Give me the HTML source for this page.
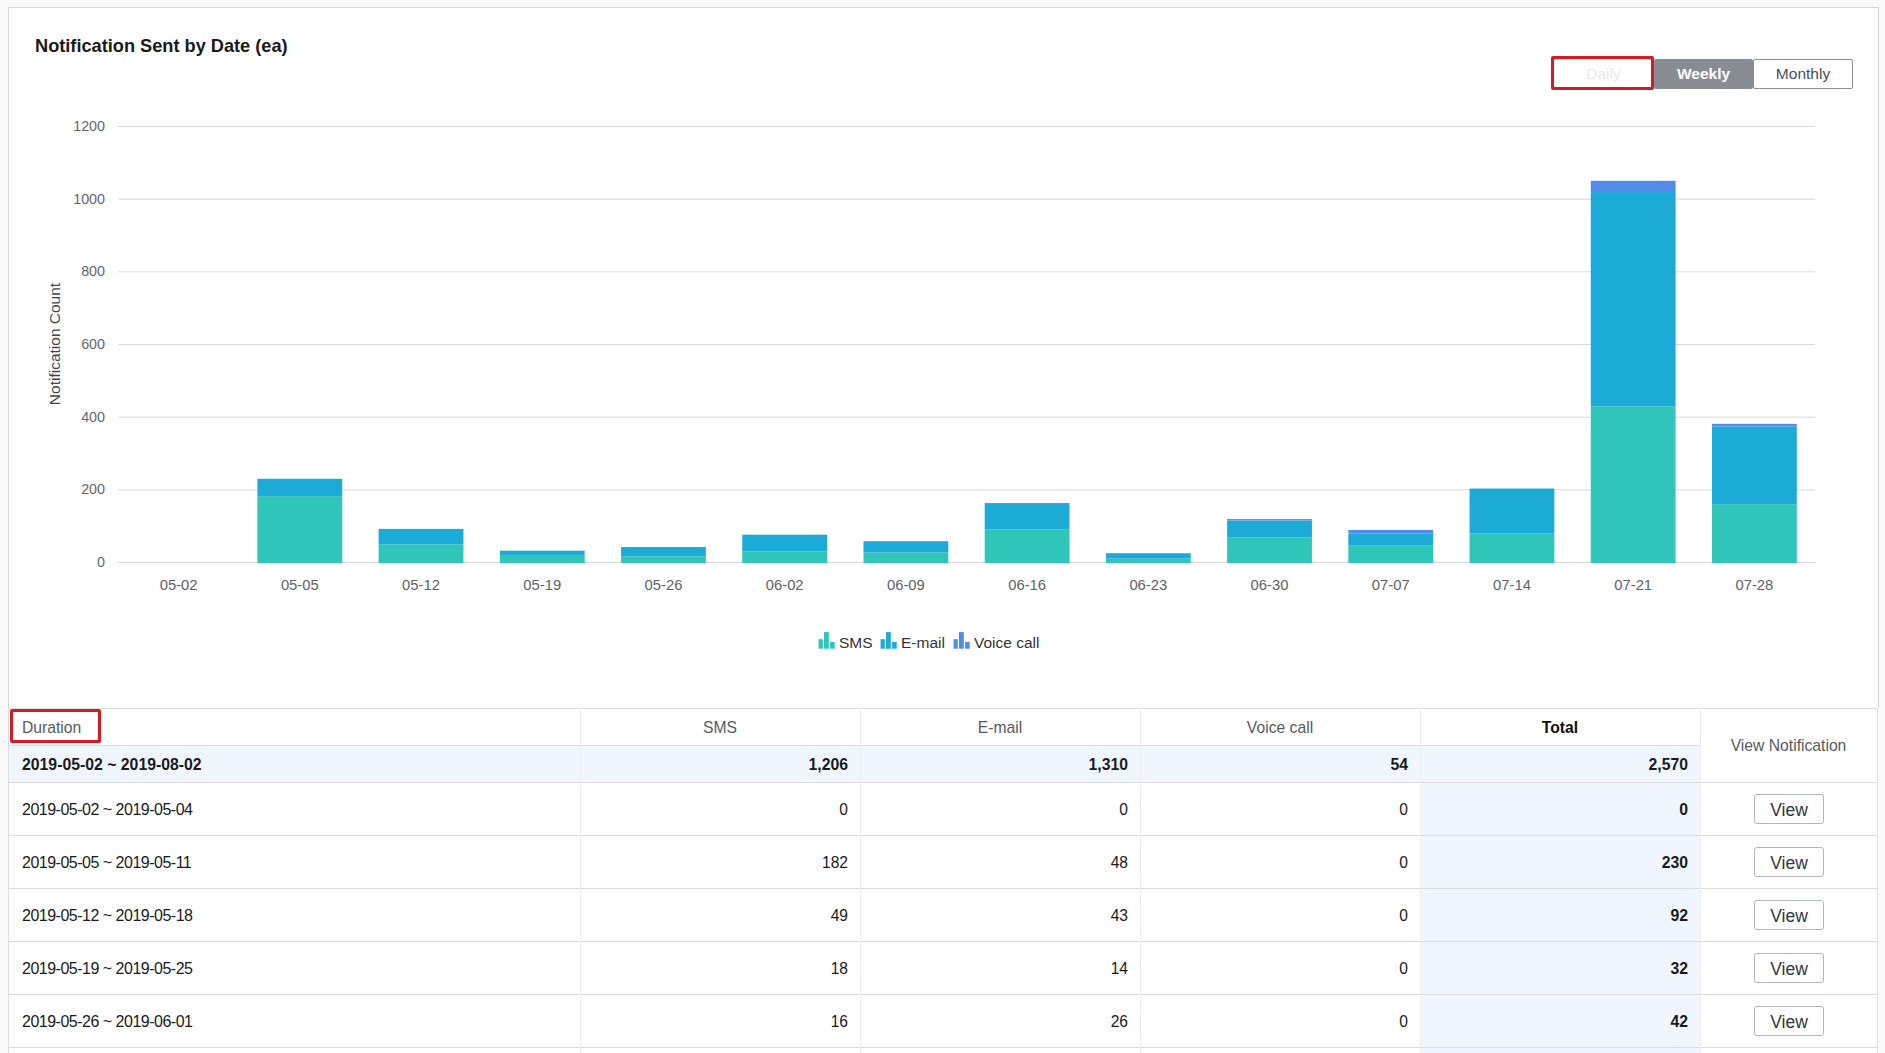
<!DOCTYPE html>
<html><head><meta charset="utf-8"><style>
html,body{margin:0;padding:0}
body{width:1885px;height:1053px;background:#f9f9f9;position:relative;overflow:hidden;font-family:"Liberation Sans",sans-serif}
.card{position:absolute;left:8px;top:7px;width:1869px;height:700px;background:#fff;border:1px solid #d8d9dc;border-bottom:none}
.white{position:absolute;left:8px;top:708px;width:1871px;height:345px;background:#fff}
.title{position:absolute;left:35px;top:36px;font-size:18.2px;font-weight:bold;color:#1a1a1a;white-space:nowrap}
.btn{position:absolute;top:59px;height:30px;box-sizing:border-box;font-size:15.5px;line-height:29px;text-align:center;border-radius:2px}
.red{position:absolute;box-sizing:border-box;border:3px solid #d01c27;border-radius:2px}
svg.chart{position:absolute;left:0;top:0}
.yl{font-size:14.3px;fill:#63676d}
.xl{font-size:14.8px;fill:#5e6268}
.ytitle{position:absolute;left:54.5px;top:343.5px;transform:translate(-50%,-50%) rotate(-90deg);font-size:15.5px;color:#444;white-space:nowrap}
.lg{position:absolute;top:632px;height:17px}
.lt{position:absolute;top:633px;font-size:15.5px;line-height:20px;color:#333;white-space:nowrap}
.bg{position:absolute;background:#eff6fd}
.hl{position:absolute;height:1px;background:#dcdcdc}
.vl{position:absolute;width:1px;background:#efefef}
.th{position:absolute;height:37px;line-height:40px;font-size:15.7px;color:#555a60;white-space:nowrap}
.td{position:absolute;height:53px;line-height:55px;font-size:15.6px;color:#1a1a1a;white-space:nowrap}
.td.b{font-weight:bold;font-size:15.8px}
.td.r{text-align:right}
.td.dt{font-size:16px;letter-spacing:-0.5px}
.vbtn{position:absolute;width:70px;height:30px;box-sizing:border-box;border:1px solid #b2b5ba;border-radius:3px;background:#fff;font-size:17.5px;line-height:30px;text-align:center;color:#2f3740}
</style></head><body>
<div class="card"></div>
<div class="white"></div>
<div class="title">Notification Sent by Date (ea)</div>
<div class="btn" style="left:1553px;width:101px;line-height:28px;border:1px solid #ddd;color:#e8e8e8;background:#fff">Daily</div>
<div class="btn" style="left:1654px;width:99px;background:#888c93;color:#fff;font-weight:bold">Weekly</div>
<div class="btn" style="left:1753px;width:100px;line-height:28px;border:1px solid #8a8d93;color:#4a4f57;background:#fff">Monthly</div>
<div class="red" style="left:1551px;top:56px;width:103px;height:34px"></div>
<svg class="chart" width="1885" height="700" font-family="Liberation Sans">
<rect x="118" y="126.00" width="1697" height="1" fill="#d9d9d9"/>
<rect x="118" y="198.67" width="1697" height="1" fill="#d9d9d9"/>
<rect x="118" y="271.33" width="1697" height="1" fill="#d9d9d9"/>
<rect x="118" y="344.00" width="1697" height="1" fill="#d9d9d9"/>
<rect x="118" y="416.67" width="1697" height="1" fill="#d9d9d9"/>
<rect x="118" y="489.33" width="1697" height="1" fill="#d9d9d9"/>
<rect x="118" y="562.00" width="1697" height="1" fill="#d9d9d9"/>
<text x="105" y="131.00" text-anchor="end" class="yl">1200</text>
<text x="105" y="203.67" text-anchor="end" class="yl">1000</text>
<text x="105" y="276.33" text-anchor="end" class="yl">800</text>
<text x="105" y="349.00" text-anchor="end" class="yl">600</text>
<text x="105" y="421.67" text-anchor="end" class="yl">400</text>
<text x="105" y="494.33" text-anchor="end" class="yl">200</text>
<text x="105" y="567.00" text-anchor="end" class="yl">0</text>
<text x="178.61" y="590.3" text-anchor="middle" class="xl">05-02</text>
<rect x="257.41" y="496.17" width="84.8" height="66.83" fill="#2fc5b8"/>
<rect x="257.41" y="478.73" width="84.8" height="17.44" fill="#1caad7"/>
<text x="299.82" y="590.3" text-anchor="middle" class="xl">05-05</text>
<rect x="378.63" y="544.50" width="84.8" height="18.50" fill="#2fc5b8"/>
<rect x="378.63" y="528.87" width="84.8" height="15.62" fill="#1caad7"/>
<text x="421.04" y="590.3" text-anchor="middle" class="xl">05-12</text>
<rect x="499.84" y="555.76" width="84.8" height="7.24" fill="#2fc5b8"/>
<rect x="499.84" y="550.67" width="84.8" height="5.09" fill="#1caad7"/>
<text x="542.25" y="590.3" text-anchor="middle" class="xl">05-19</text>
<rect x="621.06" y="556.49" width="84.8" height="6.51" fill="#2fc5b8"/>
<rect x="621.06" y="547.04" width="84.8" height="9.45" fill="#1caad7"/>
<text x="663.46" y="590.3" text-anchor="middle" class="xl">05-26</text>
<rect x="742.27" y="551.40" width="84.8" height="11.60" fill="#2fc5b8"/>
<rect x="742.27" y="534.69" width="84.8" height="16.71" fill="#1caad7"/>
<text x="784.68" y="590.3" text-anchor="middle" class="xl">06-02</text>
<rect x="863.49" y="552.49" width="84.8" height="10.51" fill="#2fc5b8"/>
<rect x="863.49" y="541.23" width="84.8" height="11.26" fill="#1caad7"/>
<text x="905.89" y="590.3" text-anchor="middle" class="xl">06-09</text>
<rect x="984.70" y="529.60" width="84.8" height="33.40" fill="#2fc5b8"/>
<rect x="984.70" y="503.08" width="84.8" height="26.52" fill="#1caad7"/>
<text x="1027.11" y="590.3" text-anchor="middle" class="xl">06-16</text>
<rect x="1105.91" y="558.67" width="84.8" height="4.33" fill="#2fc5b8"/>
<rect x="1105.91" y="553.22" width="84.8" height="5.45" fill="#1caad7"/>
<text x="1148.32" y="590.3" text-anchor="middle" class="xl">06-23</text>
<rect x="1227.13" y="537.59" width="84.8" height="25.41" fill="#2fc5b8"/>
<rect x="1227.13" y="520.52" width="84.8" height="17.08" fill="#1caad7"/>
<rect x="1227.13" y="519.06" width="84.8" height="1.45" fill="#518cea"/>
<text x="1269.54" y="590.3" text-anchor="middle" class="xl">06-30</text>
<rect x="1348.34" y="545.22" width="84.8" height="17.78" fill="#2fc5b8"/>
<rect x="1348.34" y="533.60" width="84.8" height="11.63" fill="#1caad7"/>
<rect x="1348.34" y="529.96" width="84.8" height="3.63" fill="#518cea"/>
<text x="1390.75" y="590.3" text-anchor="middle" class="xl">07-07</text>
<rect x="1469.56" y="533.60" width="84.8" height="29.40" fill="#2fc5b8"/>
<rect x="1469.56" y="488.54" width="84.8" height="45.05" fill="#1caad7"/>
<text x="1511.96" y="590.3" text-anchor="middle" class="xl">07-14</text>
<rect x="1590.77" y="406.43" width="84.8" height="156.57" fill="#2fc5b8"/>
<rect x="1590.77" y="192.06" width="84.8" height="214.37" fill="#1caad7"/>
<rect x="1590.77" y="180.80" width="84.8" height="11.26" fill="#518cea"/>
<text x="1633.18" y="590.3" text-anchor="middle" class="xl">07-21</text>
<rect x="1711.99" y="504.17" width="84.8" height="58.83" fill="#2fc5b8"/>
<rect x="1711.99" y="426.41" width="84.8" height="77.75" fill="#1caad7"/>
<rect x="1711.99" y="423.87" width="84.8" height="2.54" fill="#518cea"/>
<text x="1754.39" y="590.3" text-anchor="middle" class="xl">07-28</text>
</svg>
<div class="ytitle">Notification Count</div>
<div class="lg" style="left:818px"><svg width="17" height="17" viewBox="0 0 17 17" style="display:block"><rect x="0.6" y="7.2" width="4.2" height="9.5" fill="#2fc5b8"/><rect x="6" y="0.1" width="4.8" height="16.6" fill="#2fc5b8"/><rect x="12.1" y="10" width="4.6" height="6.7" fill="#2fc5b8"/></svg></div><div class="lt" style="left:839px">SMS</div>
<div class="lg" style="left:880px"><svg width="17" height="17" viewBox="0 0 17 17" style="display:block"><rect x="0.6" y="7.2" width="4.2" height="9.5" fill="#1caad7"/><rect x="6" y="0.1" width="4.8" height="16.6" fill="#1caad7"/><rect x="12.1" y="10" width="4.6" height="6.7" fill="#1caad7"/></svg></div><div class="lt" style="left:901px">E-mail</div>
<div class="lg" style="left:953px"><svg width="17" height="17" viewBox="0 0 17 17" style="display:block"><rect x="0.6" y="7.2" width="4.2" height="9.5" fill="#518cea"/><rect x="6" y="0.1" width="4.8" height="16.6" fill="#518cea"/><rect x="12.1" y="10" width="4.6" height="6.7" fill="#518cea"/></svg></div><div class="lt" style="left:974px">Voice call</div>
<div class="bg" style="left:1421px;top:783px;width:279px;height:270px"></div>
<div class="bg" style="left:9px;top:746px;width:1691px;height:36px"></div>
<div class="hl" style="left:8px;top:708px;width:1870px"></div>
<div class="hl" style="left:8px;top:745px;width:1692px"></div>
<div class="hl" style="left:8px;top:782px;width:1870px"></div>
<div class="hl" style="left:8px;top:835px;width:1870px"></div>
<div class="hl" style="left:8px;top:888px;width:1870px"></div>
<div class="hl" style="left:8px;top:941px;width:1870px"></div>
<div class="hl" style="left:8px;top:994px;width:1870px"></div>
<div class="hl" style="left:8px;top:1047px;width:1870px"></div>
<div class="vl" style="left:8px;top:708px;height:345px;background:#dedede"></div>
<div class="vl" style="left:1877px;top:708px;height:345px;background:#dedede"></div>
<div class="vl" style="left:580px;top:708px;height:345px"></div>
<div class="vl" style="left:860px;top:708px;height:345px"></div>
<div class="vl" style="left:1140px;top:708px;height:345px"></div>
<div class="vl" style="left:1420px;top:708px;height:345px"></div>
<div class="vl" style="left:1700px;top:708px;height:345px"></div>
<div class="th" style="left:22px;top:708px;width:300px;text-align:left">Duration</div>
<div class="th" style="left:580px;top:708px;width:280px;text-align:center">SMS</div>
<div class="th" style="left:860px;top:708px;width:280px;text-align:center">E-mail</div>
<div class="th" style="left:1140px;top:708px;width:280px;text-align:center">Voice call</div>
<div class="th" style="left:1420px;top:708px;width:280px;text-align:center;color:#111;font-weight:bold">Total</div>
<div class="th" style="left:1700px;top:726px;width:177px;text-align:center">View Notification</div>
<div class="td b" style="left:22px;top:745px;width:400px;height:37px;line-height:40px">2019-05-02 ~ 2019-08-02</div>
<div class="td b r" style="left:580px;top:745px;width:268px;height:37px;line-height:40px">1,206</div>
<div class="td b r" style="left:860px;top:745px;width:268px;height:37px;line-height:40px">1,310</div>
<div class="td b r" style="left:1140px;top:745px;width:268px;height:37px;line-height:40px">54</div>
<div class="td b r" style="left:1420px;top:745px;width:268px;height:37px;line-height:40px">2,570</div>
<div class="td dt" style="left:22px;top:782px;width:400px">2019-05-02 ~ 2019-05-04</div>
<div class="td r" style="left:580px;top:782px;width:268px">0</div>
<div class="td r" style="left:860px;top:782px;width:268px">0</div>
<div class="td r" style="left:1140px;top:782px;width:268px">0</div>
<div class="td r b" style="left:1420px;top:782px;width:268px">0</div>
<div class="vbtn" style="left:1754px;top:794px">View</div>
<div class="td dt" style="left:22px;top:835px;width:400px">2019-05-05 ~ 2019-05-11</div>
<div class="td r" style="left:580px;top:835px;width:268px">182</div>
<div class="td r" style="left:860px;top:835px;width:268px">48</div>
<div class="td r" style="left:1140px;top:835px;width:268px">0</div>
<div class="td r b" style="left:1420px;top:835px;width:268px">230</div>
<div class="vbtn" style="left:1754px;top:847px">View</div>
<div class="td dt" style="left:22px;top:888px;width:400px">2019-05-12 ~ 2019-05-18</div>
<div class="td r" style="left:580px;top:888px;width:268px">49</div>
<div class="td r" style="left:860px;top:888px;width:268px">43</div>
<div class="td r" style="left:1140px;top:888px;width:268px">0</div>
<div class="td r b" style="left:1420px;top:888px;width:268px">92</div>
<div class="vbtn" style="left:1754px;top:900px">View</div>
<div class="td dt" style="left:22px;top:941px;width:400px">2019-05-19 ~ 2019-05-25</div>
<div class="td r" style="left:580px;top:941px;width:268px">18</div>
<div class="td r" style="left:860px;top:941px;width:268px">14</div>
<div class="td r" style="left:1140px;top:941px;width:268px">0</div>
<div class="td r b" style="left:1420px;top:941px;width:268px">32</div>
<div class="vbtn" style="left:1754px;top:953px">View</div>
<div class="td dt" style="left:22px;top:994px;width:400px">2019-05-26 ~ 2019-06-01</div>
<div class="td r" style="left:580px;top:994px;width:268px">16</div>
<div class="td r" style="left:860px;top:994px;width:268px">26</div>
<div class="td r" style="left:1140px;top:994px;width:268px">0</div>
<div class="td r b" style="left:1420px;top:994px;width:268px">42</div>
<div class="vbtn" style="left:1754px;top:1006px">View</div>
<div class="red" style="left:10px;top:709px;width:91px;height:34px"></div>
</body></html>
